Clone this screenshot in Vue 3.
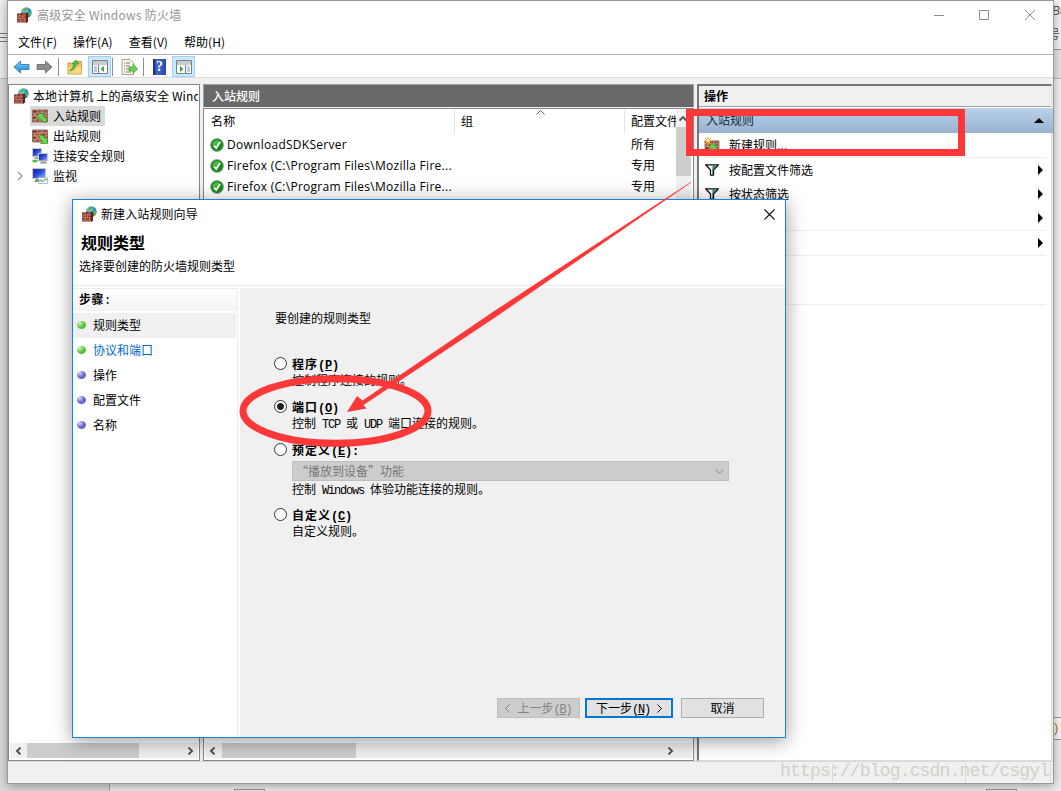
<script setup>
import { ref } from "vue";

const menus = ["文件(F)", "操作(A)", "查看(V)", "帮助(H)"];

const tree = [
  { label: "入站规则", icon: "wall-in", active: true },
  { label: "出站规则", icon: "wall-out" },
  { label: "连接安全规则", icon: "link" },
  { label: "监视", icon: "monitor", arrow: true },
];

const rules = [
  { name: "DownloadSDKServer", profile: "所有" },
  { name: "Firefox (C:\\Program Files\\Mozilla Fire...", profile: "专用" },
  { name: "Firefox (C:\\Program Files\\Mozilla Fire...", profile: "专用" },
];

const steps = [
  { label: "规则类型", state: "current" },
  { label: "协议和端口", state: "next" },
  { label: "操作", state: "todo" },
  { label: "配置文件", state: "todo" },
  { label: "名称", state: "todo" },
];

const selected = ref("port");
</script>

<template>
  <div class="desktop">
    <svg class="defs">
      <defs>
        <radialGradient id="globe" cx=".35" cy=".3" r=".8">
          <stop offset="0" stop-color="#b9ecff" />
          <stop offset=".5" stop-color="#2e8fd6" />
          <stop offset="1" stop-color="#0b4a9c" />
        </radialGradient>
        <linearGradient id="blue" x2="0" y2="1">
          <stop offset="0" stop-color="#7fd4f8" />
          <stop offset="1" stop-color="#1582cf" />
        </linearGradient>
        <linearGradient id="screen" x2="1" y2="1">
          <stop offset="0" stop-color="#0818a8" />
          <stop offset=".5" stop-color="#2a50dc" />
          <stop offset="1" stop-color="#a9c6ff" />
        </linearGradient>
      </defs>
      <symbol id="firewall" viewBox="0 0 16 16">
        <circle cx="10.3" cy="5.6" r="5.3" fill="url(#globe)" />
        <path d="M8 1.2q3-1 4 .5l-2 2-2 1-1.500-1zM12.500 5l2.500-1v4l-2 2z" fill="#52b94a" />
        <path d="M1 6.500l9-1 2 1v8l-2 1H1z" fill="#8f3a2b" />
        <path d="M10 6.500l2-1v9l-2 1.500z" fill="#5e2219" />
        <path d="M1 9h9M1 11.500h9M1 14h9M4 6v3M8 6v3M3 9v2.500M6.500 9v2.500M4.500 11.500V14M8.500 11.500V14" stroke="#d19a86" stroke-width=".6" />
      </symbol>
      <symbol id="wall" viewBox="0 0 16 14">
        <path d="M.5 1h15v12H.5z" fill="#a3503e" stroke="#8a7468" />
        <path d="M1 4h14M1 7h14M1 10h14M5 1v3M10 1v3M3 4v3M8 4v3M13 4v3M5 7v3M10 7v3M3 10v3M8 10v3" stroke="#dfb9a8" stroke-width=".7" />
        <path d="M1 2h4v1.500H1zM9 5h4v1.500H9zM1 8h3v1.500H1z" fill="#7a2d20" />
      </symbol>
      <symbol id="wall-in" viewBox="0 0 16 16">
        <use href="#wall" y="1" width="16" height="14" />
        <path d="M6 5.500h7L11 7.500l4.500 4.500-3 3L8 10.500l-2 2z" fill="#6bd650" stroke="#237a1b" stroke-width=".6" />
      </symbol>
      <symbol id="wall-out" viewBox="0 0 16 16">
        <use href="#wall" y="1" width="16" height="14" />
        <path d="M15.500 15.500h-7l2-2L6.500 9.500l3-3 4 4 2-2z" fill="#6bd650" stroke="#237a1b" stroke-width=".6" />
      </symbol>
      <symbol id="wall-new" viewBox="0 0 16 16">
        <use href="#wall" y="3" width="16" height="13" />
        <path d="M6 7h7l-2 2 5 5v2H9l-1-3-2 2z" fill="#63d04c" stroke="#2b7a22" stroke-width=".6" />
        <path d="M4 0v8M0 4h8M1 1l6 6M7 1L1 7" stroke="#eda82d" />
        <circle cx="4" cy="4" r="1.500" fill="#fff3a5" />
      </symbol>
      <symbol id="link" viewBox="0 0 16 16">
        <path d="M.5.500h9v8h-9z" fill="url(#screen)" stroke="#cfcabb" />
        <path d="M3 9h4v2H2z" fill="#a9a59a" />
        <path d="M6.500 5.500h9v7.500h-9z" fill="url(#screen)" stroke="#cfcabb" />
        <path d="M9 13.500h5l1 2H8z" fill="#99968f" />
        <path d="M.5 13h5" stroke="#55b73c" stroke-width="2.500" />
      </symbol>
      <symbol id="monitor" viewBox="0 0 16 16">
        <path d="M.6.600h13v10H.600z" fill="url(#screen)" stroke="#cfcabb" />
        <path d="M4 11h6v3H2z" fill="#8e8b84" />
        <path d="M6.500 9.500h9v6h-9z" fill="#f3fbff" stroke="#8aa9b5" stroke-width=".7" />
        <path d="M7 13l2-1 1.500 2L13 11l2 1" fill="none" stroke="#35a83b" />
      </symbol>
      <symbol id="funnel" viewBox="0 0 14 12">
        <path d="M.8.800h12.400L8.500 6v5.200h-3V6z" fill="#fff" stroke="#111" stroke-width="1.300" />
        <path d="M7.500 1.500h4L8 5.500v5H7z" fill="#2b8f8f" />
      </symbol>
      <symbol id="check" viewBox="0 0 14 14">
        <circle cx="7" cy="7" r="6.500" fill="#178a17" stroke="#a5aaa5" />
        <path d="M2.500 5q4.500-6 9 0Q8 7 2.500 7z" fill="#4db845" />
        <path d="M4 7.500L6.200 10 10 4" fill="none" stroke="#fff" stroke-width="1.900" />
      </symbol>
      <symbol id="left" viewBox="0 0 8 8">
        <path d="M5.500 .5L2 4l3.500 3.500" fill="none" stroke="#505050" stroke-width="1.900" />
      </symbol>
    </svg>

    <!-- slivers of the editor left open underneath -->
    <div class="behind-left"><i></i><i></i><i></i></div>
    <div class="behind-right">
      <span class="code">Bu</span>
      <span class="mark">号</span>
      <span class="paren">)'</span>
    </div>
    <div class="behind-bottom"><i></i><i></i></div>

    <div class="window">
      <header class="titlebar">
        <svg class="app-icon"><use href="#firewall" /></svg>
        <span class="title">高级安全 Windows 防火墙</span>
        <svg class="controls" viewBox="0 0 104 12">
          <path d="M1 6.500h10M46.500 1.500h9v9h-9zM92 1l10 10M102 1L92 11" fill="none" stroke="#8e8e8e" />
        </svg>
      </header>

      <nav class="menubar">
        <span v-for="m in menus" :key="m">{{ m }}</span>
      </nav>

      <div class="toolbar">
        <svg class="arrow" viewBox="0 0 17 14">
          <path d="M1 7l6.500-6v3.500H16v5H7.500V13z" fill="url(#blue)" stroke="#2877ae" stroke-width=".8" />
        </svg>
        <svg class="arrow" viewBox="0 0 17 14">
          <path d="M16 7L9.500 1v3.500H1v5h8.500V13z" fill="#8b8b8b" stroke="#666" stroke-width=".8" />
        </svg>
        <i class="sep"></i>
        <svg class="tool folder" viewBox="0 0 16 16">
          <path d="M1 4h5l1-1.500h7.500V15H1z" fill="#edc766" stroke="#b18a31" stroke-width=".8" />
          <path d="M1.500 8h13v6.500h-13z" fill="#f5d781" />
          <path d="M3 11q3-1 4-6H5l4-4 3 4H9.500Q8 11 3 12z" fill="#4ec239" stroke="#268a1e" stroke-width=".5" />
        </svg>
        <span class="pressed">
          <svg viewBox="0 0 16 14">
            <path d="M.5.500h15v13H.500z" fill="#fff" stroke="#777f86" />
            <path d="M1 2h14M1 4h14" stroke="#8c979f" />
            <path d="M6.500 5v8" stroke="#777f86" />
            <path d="M2 7h3M2 9h3M2 11h3" stroke="#7396b3" />
            <path d="M12 6v6L8.500 9z" fill="#3aaa31" />
          </svg>
        </span>
        <i class="sep near"></i>
        <svg class="tool export" viewBox="0 0 17 16">
          <path d="M1 .500h8L12.500 4v11.500H1z" fill="#fbf8e6" stroke="#8b8a7a" stroke-width=".8" />
          <path d="M3 4h1M5 4h4M3 7h1M5 7h4M3 10h1M5 10h3M3 13h1M5 13h5" stroke="#777" />
          <path d="M8 8h4V5l4.700 5L12 14.500V12H8z" fill="#6bce4e" stroke="#3c9930" stroke-width=".6" />
        </svg>
        <i class="sep"></i>
        <span class="help">?</span>
        <span class="pressed">
          <svg viewBox="0 0 16 14">
            <path d="M.5.500h15v13H.500z" fill="#fff" stroke="#777f86" />
            <path d="M1 2h14M1 4h14" stroke="#8c979f" />
            <path d="M9.500 5v8" stroke="#777f86" />
            <path d="M11 7h3M11 9h3M11 11h3" stroke="#7396b3" />
            <path d="M4 6v6l3.500-3z" fill="#3aaa31" />
          </svg>
        </span>
      </div>

      <main class="panes">
        <aside class="tree">
          <div class="tree-root">
            <svg><use href="#firewall" /></svg>
            <span>本地计算机 上的高级安全 Windows</span>
          </div>
          <div v-for="t in tree" :key="t.label" class="tree-row">
            <svg class="expander" viewBox="0 0 6 10">
              <path v-if="t.arrow" d="M1 1l4 4-4 4" fill="none" stroke="#a0a0a0" stroke-width="1.400" />
            </svg>
            <div class="tree-item" :class="{ active: t.active }">
              <svg><use :href="'#' + t.icon" /></svg>
              <span>{{ t.label }}</span>
            </div>
          </div>
          <div class="hscroll tree-scroll">
            <svg><use href="#left" /></svg>
            <i></i>
            <svg class="flip"><use href="#left" /></svg>
          </div>
        </aside>

        <section class="middle">
          <h2>入站规则</h2>
          <div class="list">
            <div class="list-top">
              <div class="table">
                <div class="row head">
                  <span class="c-name">名称</span>
                  <span class="c-group">
                    组
                    <svg viewBox="0 0 9 5"><path d="M.5 4.500l4-4 4 4" fill="none" stroke="#666" /></svg>
                  </span>
                  <span class="c-profile">配置文件</span>
                </div>
                <div v-for="(r, i) in rules" :key="i" class="row">
                  <span class="c-name"><svg><use href="#check" /></svg>{{ r.name }}</span>
                  <span class="c-group"></span>
                  <span class="c-profile">{{ r.profile }}</span>
                </div>
              </div>
              <div class="vscroll">
                <svg class="up"><use href="#left" /></svg>
                <i></i>
              </div>
            </div>
            <div class="last-row"><span>g</span><span>y</span></div>
            <div class="hscroll list-scroll">
              <svg><use href="#left" /></svg>
              <i></i>
              <svg class="flip"><use href="#left" /></svg>
            </div>
          </div>
        </section>

        <aside class="actions">
          <h3>操作</h3>
          <div class="group">
            <span>入站规则</span>
            <i class="tri-up"></i>
          </div>
          <div class="action new">
            <svg><use href="#wall-new" /></svg>
            <span>新建规则...</span>
          </div>
          <div class="action">
            <svg class="funnel"><use href="#funnel" /></svg>
            <span>按配置文件筛选</span>
            <i class="tri"></i>
          </div>
          <div class="action">
            <svg class="funnel"><use href="#funnel" /></svg>
            <span>按状态筛选</span>
            <i class="tri"></i>
          </div>
          <div class="action line"><i class="tri"></i></div>
          <div class="action line"><i class="tri"></i></div>
          <div class="action tall line"></div>
        </aside>
      </main>

      <footer class="statusbar"><i></i><i></i><i></i></footer>
    </div>

    <div class="dialog">
      <header class="dialog-title">
        <svg class="app-icon"><use href="#firewall" /></svg>
        <span>新建入站规则向导</span>
        <svg class="close" viewBox="0 0 11 11"><path d="M.5.500l10 10M10.500.500l-10 10" stroke="#111" stroke-width="1.100" /></svg>
      </header>
      <div class="dialog-head">
        <h1>规则类型</h1>
        <p>选择要创建的防火墙规则类型</p>
      </div>
      <div class="dialog-body">
        <aside class="steps">
          <h4>步骤<tt>:</tt></h4>
          <div v-for="s in steps" :key="s.label" class="step" :class="s.state">
            <i></i><span>{{ s.label }}</span>
          </div>
        </aside>
        <section class="content">
          <p class="lead">要创建的规则类型</p>
          <div class="options">
            <label class="option" :class="{ on: selected == 'program' }" @click="selected = 'program'">
              <i class="radio"></i>
              <div>
                <b>程序<tt>(<u>P</u>)</tt></b>
                <p>控制程序连接的规则。</p>
              </div>
            </label>
            <label class="option" :class="{ on: selected == 'port' }" @click="selected = 'port'">
              <i class="radio"></i>
              <div>
                <b>端口<tt>(<u>O</u>)</tt></b>
                <p>控制<tt> TCP </tt>或<tt> UDP </tt>端口连接的规则。</p>
              </div>
            </label>
            <label class="option predefined" :class="{ on: selected == 'predefined' }" @click="selected = 'predefined'">
              <i class="radio"></i>
              <div>
                <b>预定义<tt>(<u>E</u>):</tt></b>
                <div class="select">
                  <span>“播放到设备”功能</span>
                  <svg viewBox="0 0 9 5"><path d="M.5.500l4 4 4-4" fill="none" stroke="#a3a3a3" stroke-width="1.200" /></svg>
                </div>
                <p>控制<tt> Windows </tt>体验功能连接的规则。</p>
              </div>
            </label>
            <label class="option" :class="{ on: selected == 'custom' }" @click="selected = 'custom'">
              <i class="radio"></i>
              <div>
                <b>自定义<tt>(<u>C</u>)</tt></b>
                <p>自定义规则。</p>
              </div>
            </label>
          </div>
          <div class="buttons">
            <button class="back" disabled>
              <svg viewBox="0 0 5 9"><path d="M4.500.500l-4 4 4 4" /></svg>
              <span>上一步<tt>(<u>B</u>)</tt></span>
            </button>
            <button class="next">
              <span>下一步<tt>(<u>N</u>)</tt></span>
              <svg viewBox="0 0 5 9"><path d="M.5.500l4 4-4 4" /></svg>
            </button>
            <button class="cancel">取消</button>
          </div>
        </section>
      </div>
    </div>

    <!-- red pen marks -->
    <svg class="marks" viewBox="0 0 1061 791">
      <rect x="689.500" y="112.500" width="272" height="40" />
      <ellipse cx="335.500" cy="411" rx="92.500" ry="32.300" />
      <path d="M347 412l10-16 5.500 4.500L495 310.500 660 202 691 182l.3.400L660 204 495 317.500 363.500 405l3 3.500z" />
    </svg>

    <div class="watermark">https://blog.csdn.net/csgyl</div>
  </div>
</template>

<style>
body {
  overflow: hidden;
}
</style>

<style scoped>
* {
  box-sizing: border-box;
}
.desktop {
  position: relative;
  width: 1061px;
  height: 791px;
  overflow: hidden;
  background: #efefef;
  font: 12px/16px "Noto Sans CJK SC", sans-serif;
  color: #000;
}
svg {
  display: block;
  flex: none;
}
h1,
h2,
h3,
h4,
p {
  margin: 0;
}
.defs {
  position: absolute;
  width: 0;
  height: 0;
}

/* things peeking out around the window */
.behind-left {
  position: absolute;
  left: 0;
  top: 0;
  width: 110px;
  height: 791px;
  background: linear-gradient(#eee 78px, #bbb 78px, #bbb 79px, #dcdcdc 79px);
  border-right: 1px solid #aaa;
}
.behind-left i {
  display: block;
  width: 7px;
  height: 1px;
  margin-bottom: 3px;
  background: #777;
}
.behind-left i:first-child {
  margin-top: 33px;
}
.behind-right {
  position: absolute;
  right: 0;
  top: 0;
  width: 12px;
  height: 791px;
  padding-left: 3px;
  overflow: hidden;
  white-space: nowrap;
  background: linear-gradient(
    #f6f6f6 49px, #999 49px, #999 50px, #e6e6e6 50px, #e6e6e6 78px, #bbb 78px,
    #bbb 79px, #f4f4f4 79px, #f4f4f4 717px, #999 717px, #999 718px,
    #fafafa 718px, #fafafa 739px, #999 739px, #999 740px, #eee 740px
  );
}
.behind-right span {
  display: block;
}
.code {
  margin-top: 3px;
  font: italic 12px/16px "Liberation Sans", sans-serif;
  color: #555;
}
.mark {
  margin: 7px 0 0 -4px;
  color: #555;
}
.paren {
  margin-top: 679px;
  font: 13px/16px "Liberation Mono", monospace;
  letter-spacing: -2px;
  color: #b5803a;
}
.behind-bottom {
  position: absolute;
  left: 234px;
  bottom: 0;
  width: 783px;
  display: flex;
  justify-content: space-between;
}
.behind-bottom i {
  width: 31px;
  height: 2px;
  border: 1px solid #999;
  border-bottom: 0;
}

/* main window */
.window {
  position: absolute;
  left: 7px;
  top: 0;
  width: 1047px;
  height: 784px;
  display: flex;
  flex-direction: column;
  background: #f0f0f0;
  border: 1px solid #999;
  box-shadow: 0 2px 10px rgba(0, 0, 0, 0.35);
}
.app-icon {
  width: 16px;
  height: 16px;
}
.titlebar {
  height: 30px;
  display: flex;
  align-items: center;
  padding: 0 18px 2px 8px;
  background: #fff;
  color: #959595;
}
.title {
  margin-left: 5px;
  letter-spacing: 0.25px;
}
.controls {
  width: 104px;
  height: 12px;
  margin-left: auto;
  margin-right: -2px;
}
.menubar {
  height: 24px;
  display: flex;
  align-items: center;
  gap: 16px;
  padding: 0 0 1px 10px;
  background: #fff;
  border-bottom: 1px solid #b0b0b0;
  letter-spacing: 0.05px;
}
.toolbar {
  height: 23px;
  display: flex;
  align-items: center;
  padding: 1px 0 0 5px;
  background: #fff;
  border-bottom: 1px solid #dcdcdc;
}
.arrow {
  width: 17px;
  height: 14px;
  margin-right: 6px;
}
.arrow + .sep {
  margin-left: -1px;
}
.sep {
  width: 1px;
  height: 18px;
  background: #8d8d8d;
}
.sep.near {
  margin-left: 1px;
}
.tool {
  width: 16px;
  height: 16px;
}
.folder {
  margin: 0 5px 0 8px;
}
.export {
  width: 17px;
  margin: 0 5px 0 8px;
}
.pressed {
  width: 23px;
  height: 21px;
  display: flex;
  align-items: center;
  justify-content: center;
  background: #cde8ff;
  border: 1px solid #99d1ff;
}
.pressed svg {
  width: 16px;
  height: 14px;
}
.help {
  width: 13px;
  height: 16px;
  margin: 0 6px 0 9px;
  background: linear-gradient(90deg, #1e3686 2px, #4668cc 3px, #2848ac);
  color: #fff;
  font: bold 14px/16px "Liberation Serif", serif;
  text-align: center;
}
.panes {
  flex: 1;
  min-height: 0;
  display: flex;
  gap: 3px;
  padding: 6px 1px 0 0;
}

/* tree */
.tree {
  width: 192px;
  display: flex;
  flex-direction: column;
  padding: 1px;
  overflow: hidden;
  background: #fff;
  border: 1px solid #828790;
}
.tree-root,
.tree-row {
  height: 20px;
  display: flex;
  align-items: center;
  white-space: nowrap;
}
.tree span {
  margin-top: -1px;
}
.tree-root span {
  min-width: 0;
  overflow: hidden;
  letter-spacing: 0.12px;
}
.tree svg {
  width: 16px;
  height: 16px;
}
.tree-root svg {
  margin: 0 4px 0 3px;
}
.tree .expander {
  width: 6px;
  height: 10px;
  margin: 0 7px;
}
.tree-item {
  height: 20px;
  display: flex;
  align-items: center;
  gap: 5px;
  padding: 0 4px 0 2px;
}
.tree-item.active {
  background: #d9d9d9;
}

/* scrollbars */
.hscroll {
  height: 15px;
  margin-top: auto;
  display: flex;
  align-items: center;
  background: #f0f0f0;
}
.hscroll svg,
.tree .hscroll svg {
  width: 8px;
  height: 8px;
}
.hscroll i {
  height: 15px;
  background: #cdcdcd;
}
.flip {
  margin-left: auto;
  transform: scaleX(-1);
}
.tree-scroll {
  padding: 0 4px 0 5px;
  margin-bottom: 1px;
}
.tree-scroll i {
  width: 112px;
  margin-left: 4px;
}
.list-scroll {
  padding: 0 18px 0 4px;
  margin-bottom: 1px;
}
.list-scroll i {
  width: 134px;
  margin-left: 5px;
}

/* rule list */
.middle {
  width: 491px;
  display: flex;
  flex-direction: column;
}
.middle h2 {
  height: 23px;
  padding-left: 8px;
  background: #696969;
  border: 1px solid #a0a0a0;
  border-bottom: 0;
  color: #fff;
  font-size: 12px;
  font-weight: 500;
  line-height: 21px;
}
.list {
  flex: 1;
  display: flex;
  flex-direction: column;
  margin-top: 1px;
  padding: 1px;
  background: #fff;
  border: 1px solid #828790;
}
.list-top {
  display: flex;
  height: 610px;
}
.table {
  width: 471px;
  overflow: hidden;
}
.row {
  height: 21px;
  display: flex;
  align-items: center;
  white-space: nowrap;
  font-family: "Open Sans", "Noto Sans CJK SC", sans-serif;
}
.row.head {
  height: 24px;
}
.head span {
  height: 24px;
  line-height: 24px;
}
.c-name {
  width: 250px;
  flex: none;
  display: flex;
  align-items: center;
  padding-left: 5px;
  letter-spacing: 0.27px;
}
.head .c-name {
  padding-left: 6px;
}
.c-name svg {
  width: 14px;
  height: 14px;
  margin-right: 3px;
}
.c-group {
  width: 170px;
  flex: none;
  display: flex;
  padding-left: 6px;
}
.c-group svg {
  width: 9px;
  height: 5px;
  margin-left: 63px;
}
.c-profile {
  padding-left: 6px;
}
.head .c-name,
.head .c-group {
  border-right: 1px solid #e5e5e5;
}
.vscroll {
  width: 15px;
  padding-top: 5px;
  background: #f0f0f0;
}
.up {
  width: 8px;
  height: 8px;
  margin: 0 3px 4px;
  transform: rotate(90deg);
}
.vscroll i {
  display: block;
  height: 49px;
  background: #cdcdcd;
}
.last-row {
  height: 20px;
  display: flex;
  gap: 37px;
  padding-left: 36px;
  font: 12px/20px "Open Sans", sans-serif;
}

/* actions */
.actions {
  flex: 1;
  background: #fff;
  border-top: 2px solid #777;
  border-left: 2px solid #777;
  border-bottom: 1px solid #ddd;
  border-right: 1px solid #ddd;
}
.actions h3 {
  height: 21px;
  padding-left: 5px;
  background: #f0f0f0;
  border-bottom: 1px solid #a0a0a0;
  font-size: 12px;
  line-height: 20px;
}
.group {
  height: 25px;
  display: flex;
  align-items: center;
  justify-content: space-between;
  margin: 1px -2px 0 0;
  padding: 0 9px 1px 7px;
  background: linear-gradient(#b9d1ea, #98b2d0);
  color: #1a2a3c;
}
.tri-up {
  border: 5px solid transparent;
  border-top: 0;
  border-bottom: 5px solid #000;
}
.tri {
  margin-left: auto;
  border: 5px solid transparent;
  border-right: 0;
  border-left: 5px solid #000;
}
.action {
  height: 24px;
  display: flex;
  align-items: center;
  margin: 0 5px;
  padding-right: 3px;
}
.action span {
  margin-top: -1px;
}
.action svg {
  width: 16px;
  height: 16px;
  margin-right: 9px;
}
.action .funnel {
  width: 14px;
  height: 12px;
  margin: 0 10px 0 1px;
}
.action.new {
  height: 25px;
  border-bottom: 1px solid #eee;
}
.line {
  height: 25px;
  border-bottom: 1px solid #eee;
}
.tall {
  height: 49px;
}
.statusbar {
  height: 22px;
  display: flex;
  justify-content: flex-end;
  padding: 2px 2px 1px 0;
  border-top: 1px solid #d7d7d7;
}
.statusbar i {
  width: 133px;
  border-right: 1px solid #d7d7d7;
}
.statusbar i:last-child {
  width: 85px;
}

/* wizard */
.dialog {
  position: absolute;
  left: 72px;
  top: 199px;
  width: 714px;
  height: 539px;
  display: flex;
  flex-direction: column;
  background: #fff;
  border: 1px solid #1883d7;
  box-shadow: 0 3px 18px rgba(0, 0, 0, 0.4);
}
/* half-width latin next to 12px hanzi */
tt {
  font: 12px/12px "Liberation Mono", monospace;
  letter-spacing: -1.2px;
  white-space: pre;
}
b tt {
  font-weight: bold;
  letter-spacing: -0.2px;
}
.dialog-title {
  height: 30px;
  display: flex;
  align-items: center;
  gap: 4px;
  padding: 0 10px 2px 8px;
  letter-spacing: 0.1px;
}
.close {
  width: 11px;
  height: 11px;
  margin-left: auto;
}
.dialog-head {
  height: 56px;
  padding: 2px 6px 0;
  border-bottom: 1px solid #ececec;
}
.dialog-head h1 {
  padding-left: 2px;
  font-size: 16px;
  line-height: 20px;
}
.dialog-head p {
  margin-top: 6px;
}
.dialog-body {
  flex: 1;
  min-height: 0;
  display: flex;
  gap: 2px;
  padding-top: 2px;
}
.steps {
  width: 165px;
  border-right: 1px solid #ececec;
}
.steps h4 {
  height: 23px;
  padding-left: 6px;
  margin-bottom: 2px;
  background: linear-gradient(#fff, #f3f3f3);
  border-top: 1px solid #ececec;
  font-size: 12px;
  line-height: 20px;
  letter-spacing: 0.5px;
}
.step {
  height: 25px;
  display: flex;
  align-items: center;
  gap: 7px;
  margin-right: 1px;
  padding: 0 0 2px 4px;
}
.step i {
  width: 9px;
  height: 8px;
  border-radius: 50%;
  background: radial-gradient(circle at 30% 25%, #d8d8f8, #6a68cc 50%, #5a58b8);
}
.current {
  background: #f0f0f0;
}
.current i,
.next i {
  background: radial-gradient(circle at 30% 25%, #d0f5c4, #57c83c 50%, #45a932);
}
.step.next {
  color: #0066cc;
}
.content {
  flex: 1;
  display: flex;
  flex-direction: column;
  padding: 22px 21px 19px 34px;
  background: #f0f0f0;
}
.lead {
  padding-left: 1px;
}
.options {
  margin-top: 30px;
}
.option {
  height: 43px;
  display: flex;
  gap: 5px;
}
.option.predefined {
  height: 65px;
}
.option b {
  display: block;
  height: 16px;
  letter-spacing: 1px;
}
.option p {
  height: 16px;
}
.radio {
  width: 13px;
  height: 13px;
  margin-top: 1px;
  background: #fff;
  border: 1px solid #333;
  border-radius: 50%;
}
.on .radio {
  background: radial-gradient(circle, #222 3px, #fff 4px);
}
.select {
  width: 437px;
  height: 20px;
  display: flex;
  align-items: center;
  justify-content: space-between;
  margin: 3px 0 0;
  padding: 0 4px 0 3px;
  background: #ccc;
  border: 1px solid #bfbfbf;
  color: #777;
}
.select svg {
  width: 9px;
  height: 5px;
}
.buttons {
  display: flex;
  justify-content: flex-end;
  margin-top: auto;
}
button {
  width: 83px;
  height: 20px;
  display: flex;
  align-items: center;
  justify-content: center;
  gap: 7px;
  padding: 0;
  background: #e1e1e1;
  border: 1px solid #adadad;
  color: #000;
  font: 12px/16px "Noto Sans CJK SC", sans-serif;
}
button svg {
  width: 5px;
  height: 9px;
  fill: none;
  stroke: currentColor;
}
button.back {
  background: #ccc;
  border-color: #bfbfbf;
  color: #838383;
}
button.next {
  width: 88px;
  margin: 0 8px 0 5px;
  border: 2px solid #0078d7;
}

.marks {
  position: absolute;
  inset: 0;
  width: 1061px;
  height: 791px;
  pointer-events: none;
}
.marks rect,
.marks ellipse {
  fill: none;
  stroke: #fd3838;
  stroke-width: 7px;
}
.marks path {
  fill: #fd3838;
}
.watermark {
  position: absolute;
  left: 780px;
  top: 761px;
  color: #d0d0c8;
  font: 18px/20px "Liberation Mono", monospace;
  letter-spacing: -0.83px;
}
</style>
